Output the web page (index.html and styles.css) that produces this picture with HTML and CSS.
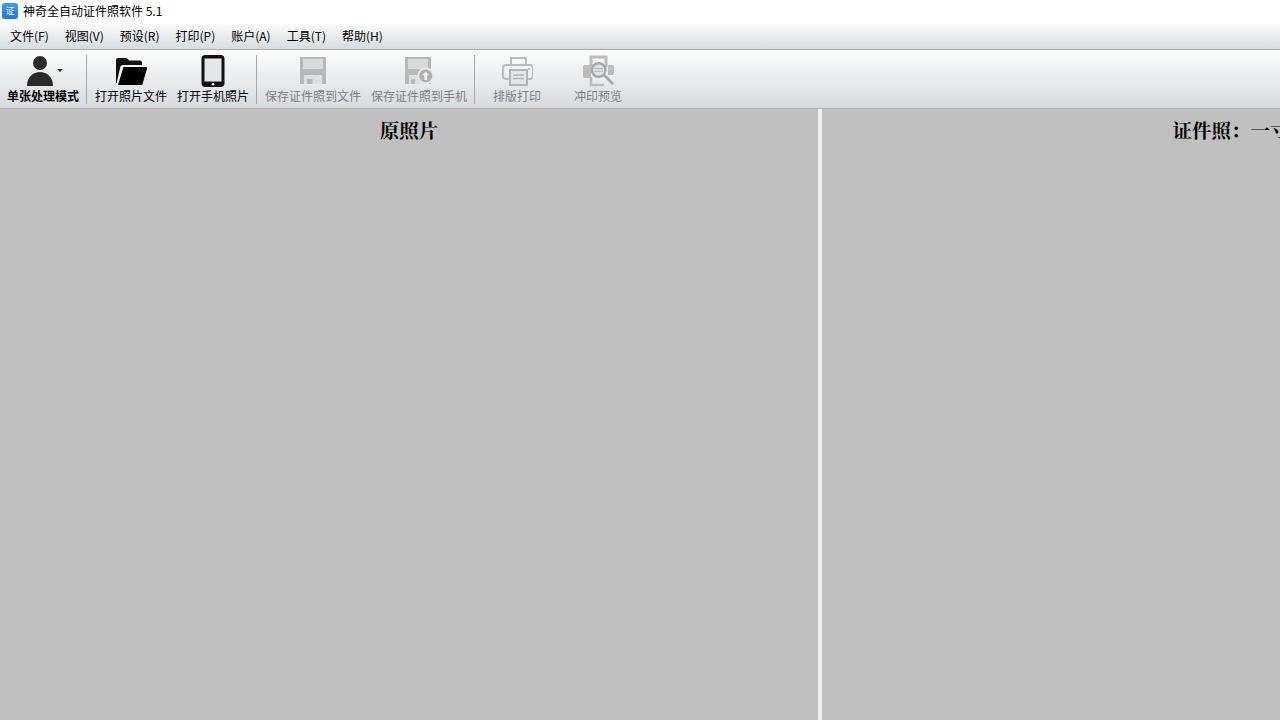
FILE: index.html
```html
<!DOCTYPE html>
<html lang="zh-CN">
<head>
  <meta charset="UTF-8">
  <title>神奇全自动证件照软件 5.1</title>
  <link rel="stylesheet" href="styles.css">
</head>
<body>
  <div class="titlebar">
    <span class="appicon">证</span>
    <span class="apptitle">神奇全自动证件照软件 5.1</span>
  </div>
  <div class="menubar">
    <span class="menu">文件(F)</span>
    <span class="menu">视图(V)</span>
    <span class="menu">预设(R)</span>
    <span class="menu">打印(P)</span>
    <span class="menu">账户(A)</span>
    <span class="menu">工具(T)</span>
    <span class="menu">帮助(H)</span>
  </div>
  <div class="toolbar">
    <div class="tool tool-mode">
      <svg width="40" height="32" viewBox="0 0 40 32">
        <circle cx="17" cy="8" r="7" fill="#2b2b2b"/>
        <path d="M4 31c0-9 6-14 13-14s13 5 13 14z" fill="#2b2b2b"/>
        <path d="M34 14h6l-3 3z" fill="#222"/>
      </svg>
      <span class="label">单张处理模式</span>
    </div>
    <div class="sep"></div>
    <div class="tool">
      <svg width="32" height="32" viewBox="0 0 32 32">
        <path d="M1 28V5c0-1 .6-2 2-2h8c1.500 0 2 1 3 2.500h11c1 0 2 .8 2 2V10H8c-1.500 0-2.300.8-2.700 2L1.600 28z" fill="#111"/>
        <path d="M8.500 12H31c1 0 1.400.8 1 1.800L27.500 29c-.3.8-1 1-1.800 1H3z" fill="#000"/>
      </svg>
      <span class="label">打开照片文件</span>
    </div>
    <div class="tool">
      <svg width="32" height="32" viewBox="0 0 32 32">
        <rect x="4.500" y="0" width="23" height="32" rx="4" fill="#111"/>
        <rect x="7.500" y="3.500" width="17" height="23" fill="#e4e7e9"/>
        <circle cx="16" cy="29.200" r="1.300" fill="#e4e7e9"/>
      </svg>
      <span class="label">打开手机照片</span>
    </div>
    <div class="sep"></div>
    <div class="tool tool-off">
      <svg width="32" height="32" viewBox="0 0 32 32">
        <path d="M3 2h26v27H3z" fill="#b8b8b8"/>
        <path d="M6 4h20v10H6z" fill="#d8dadc"/>
        <path d="M7 20h18v9H7z" fill="#dcdee0"/>
        <path d="M10 24h5.500v5H10z" fill="#b8b8b8"/>
      </svg>
      <span class="label">保存证件照到文件</span>
    </div>
    <div class="tool tool-off">
      <svg width="32" height="32" viewBox="0 0 32 32">
        <path d="M2 2h26v27H2z" fill="#b8b8b8"/>
        <path d="M5 4h20v10H5z" fill="#d8dadc"/>
        <path d="M6 20h18v9H6z" fill="#dcdee0"/>
        <path d="M8 24h4v5H8z" fill="#b8b8b8"/>
        <circle cx="22.700" cy="21" r="8.500" fill="#e4e6e8"/>
        <circle cx="22.700" cy="21" r="6.500" fill="#b0b0b0"/>
        <path d="M22.700 16.500l3.600 3.700h-2.200v4.800h-2.800v-4.800h-2.200z" fill="#f0f0f0"/>
      </svg>
      <span class="label">保存证件照到手机</span>
    </div>
    <div class="sep"></div>
    <div class="tool tool-off tool-print">
      <svg width="32" height="32" viewBox="0 0 32 32">
        <path d="M10 10V3h15v7" fill="none" stroke="#bcbcbc" stroke-width="2"/>
        <path d="M8 24H5c-1.500 0-3-1.200-3-3v-8c0-2 1.500-3 3-3h24c1.500 0 3 1 3 3v8c0 1.800-1.500 3-3 3h-2" fill="none" stroke="#bcbcbc" stroke-width="2.200"/>
        <path d="M9 15h17v15H9z" fill="#e4e7e9" stroke="#b4b4b4" stroke-width="2"/>
        <path d="M12 20h11M12 23.500h11" stroke="#b4b4b4" stroke-width="1.600"/>
        <circle cx="28" cy="14" r="1" fill="#b4b4b4"/>
      </svg>
      <span class="label">排版打印</span>
    </div>
    <div class="tool tool-off tool-print">
      <svg width="32" height="32" viewBox="0 0 32 32">
        <path d="M9 12V2h15v10" fill="none" stroke="#bcbcbc" stroke-width="3"/>
        <path d="M9 10H3c-1 0-2 .8-2 2v9c0 1.500 1 2 2 2h6zM26 10h4c1 0 2 .8 2 2v6c0 1.500-1 2-2 2h-4z" fill="#bcbcbc"/>
        <path d="M9 22v8h13" fill="none" stroke="#bcbcbc" stroke-width="2.500"/>
        <circle cx="16.700" cy="15" r="6.800" fill="#e4e7e9" stroke="#a8a8a8" stroke-width="2.400"/>
        <path d="M12.500 13.500h8.500M12.500 16.500h8.500" stroke="#bcbcbc" stroke-width="1.500"/>
        <path d="M22 20l9 9" stroke="#a8a8a8" stroke-width="2.600"/>
      </svg>
      <span class="label">冲印预览</span>
    </div>
  </div>
  <div class="workspace">
    <div class="pane">
      <h2 class="pane-title">原照片</h2>
    </div>
    <div class="splitter"></div>
    <div class="pane">
      <h2 class="pane-title">证件照：一寸</h2>
    </div>
  </div>
</body>
</html>
```

FILE: styles.css
```css
html, body { height: 100%; }
body { margin: 0; overflow: hidden; display: flex; flex-direction: column; background: #c0c0c0; color: #000; font-family: "Noto Sans CJK SC", "Liberation Sans", sans-serif; font-size: 12px; }

.titlebar { height: 24px; flex: none; display: flex; align-items: center; padding: 0 0 2px 2px; background: #fff; box-sizing: border-box; }
.appicon { width: 16px; height: 16px; margin-right: 5px; border-radius: 3px; background: linear-gradient(#3d9bff, #1478f0); color: #fff; font-size: 9px; line-height: 16px; text-align: center; }
.apptitle { line-height: 22px; }

.menubar { height: 26px; flex: none; display: flex; align-items: center; gap: 16px; padding: 0 0 2px 10px; box-sizing: border-box; background: linear-gradient(#fbfcfc, #d6dbde); border-bottom: 1px solid #a9aeb0; }
.menu { line-height: 22px; }

.toolbar { height: 59px; flex: none; display: flex; padding: 5px 0 0 3px; box-sizing: border-box; background: linear-gradient(#fdfdfd, #d7dbde); border-bottom: 1px solid #aeb2b2; }
.tool { display: flex; flex-direction: column; align-items: center; padding: 0 5px; }
.tool svg { display: block; flex: none; }
.tool-mode { width: 80px; margin-right: 1px; padding: 0; }
.tool-mode .label { font-weight: bold; }
.tool-off .label { color: #808080; }
.tool-print { width: 78px; margin-right: 3px; padding: 0; }
.label { line-height: 16px; margin-top: 1px; white-space: nowrap; }
.sep { width: 1px; height: 49px; margin: 0 3px 0 2px; background: #a4a8aa; }

.workspace { flex: 1; display: flex; overflow: hidden; }
.pane { width: 818px; flex: none; background: #c0c0c0; }
.splitter { width: 4px; flex: none; background: #f0f0f0; }
.pane-title { margin: 0; padding-top: 8px; font-family: "Noto Serif CJK SC", "Noto Sans CJK SC", serif; font-size: 19.5px; line-height: 26px; font-weight: bold; text-align: center; }
```
